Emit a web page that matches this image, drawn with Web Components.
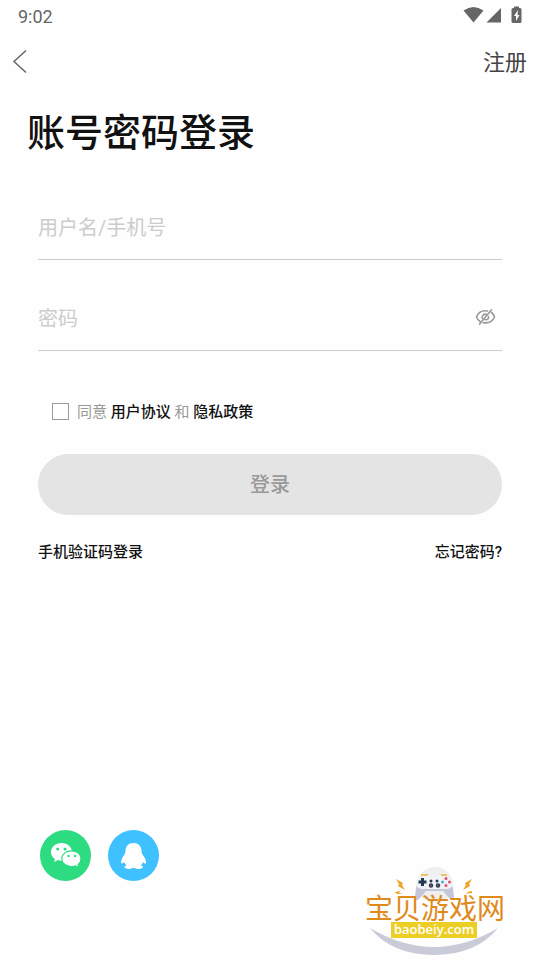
<!DOCTYPE html>
<html lang="zh-CN">
<head>
<meta charset="utf-8">
<meta name="viewport" content="width=device-width, initial-scale=1">
<title>账号密码登录</title>
<style>
  html, body { margin: 0; background: #fefefe; }
  body { font-family: Roboto, "Noto Sans CJK SC", sans-serif; color: #111; }
</style>
</head>
<body>
<login-page></login-page>

<script>
const define = (name, html, setup) => {
  const template = document.createElement('template');
  template.innerHTML = html;
  customElements.define(name, class extends HTMLElement {
    constructor() {
      super();
      this.attachShadow({ mode: 'open' }).append(template.content.cloneNode(true));
    }
    connectedCallback() { if (setup) setup(this, this.shadowRoot); }
  });
};

define('status-bar', `
  <style>
    :host { display: flex; align-items: center; justify-content: space-between; height: 32px; padding: 0 16px 0 18px; color: #666; font-size: 18px; font-weight: 400; }
    svg { display: block; }
  </style>
  <time>9:02</time>
  <svg width="61" height="20" viewBox="463 6 61 20" fill="#666" aria-hidden="true">
    <path d="M463.500 10.500Q473.500 3.500 483.500 10.500L473.500 22.500Z"/>
    <path d="M501 8V22.500H486.500Z"/>
    <path fill-rule="evenodd" d="M514 8V6.500H519V8H520Q521.500 8 521.500 9.500V21.500Q521.500 23 520 23H513Q511.500 23 511.500 21.500V9.500Q511.500 8 513 8ZM518 10L514 16H516V21L519.500 15H517.500Z"/>
  </svg>`);

define('nav-bar', `
  <style>
    :host { display: flex; align-items: center; justify-content: space-between; height: 60px; padding: 0 13px 0 12px; }
    button { display: flex; padding: 0; border: 0; background: none; }
    a { padding-top: 2px; color: #444; font-size: 22px; line-height: 32px; text-decoration: none; }
  </style>
  <button type="button" aria-label="返回">
    <svg width="16" height="26" viewBox="0 0 16 26" fill="none" stroke="#666" stroke-width="1.500"><path d="M14 1.500L2 12.500L14 23.500"/></svg>
  </button>
  <a href="#register"><slot></slot></a>`);

define('text-field', `
  <style>
    :host { display: flex; align-items: center; height: 64px; border-bottom: 1px solid #ccc; }
    input { flex: 1; min-width: 0; padding: 2px 0 0; border: 0; outline: 0; background: none; color: #111; font: inherit; font-size: 20px; line-height: 32px; }
    input::placeholder { color: #ccc; opacity: 1; }
  </style>
  <input>
  <slot></slot>`, (host, root) => {
    const input = root.querySelector('input');
    input.type = host.getAttribute('type') || 'text';
    input.placeholder = host.getAttribute('label');
    input.setAttribute('aria-label', input.placeholder);
  });

define('eye-toggle', `
  <style>
    :host { display: block; padding: 0 6px 2px 0; }
    button { display: block; padding: 0; border: 0; background: none; }
    svg { display: block; }
  </style>
  <button type="button" aria-label="显示密码">
    <svg width="21" height="18" viewBox="0 0 21 18" fill="none" stroke="#999" stroke-width="1.600" stroke-linecap="round">
      <path d="M12.500 3C7 2 3.200 4.500 1.500 9C2.300 11 3.400 12.400 5 13.500M16.500 4.500C18 5.600 18.900 7.200 19.500 9C17.500 13.500 13.500 15.600 8.300 14.700M16.500 1.800L4.500 16.200M11 6.200C8.500 5.800 6.600 8 7.300 10.200M13.500 8.500C14 10.500 12.500 12.200 10.200 11.700"/>
    </svg>
  </button>`);

define('agreement-check', `
  <style>
    :host { display: flex; align-items: center; gap: 8px; height: 24px; font-size: 15px; line-height: 24px; color: #999; }
    input { appearance: none; box-sizing: border-box; width: 17px; height: 17px; margin: 0; border: 1px solid #999; background: #fff; }
    input:checked { background: #2ddb80; }
    label { padding-top: 1px; }
    a { color: #111; font-weight: 500; text-decoration: none; }
  </style>
  <input type="checkbox" id="agree">
  <label for="agree">同意 <a href="#terms">用户协议</a> 和 <a href="#privacy">隐私政策</a></label>`);

define('submit-button', `
  <style>
    :host { display: block; }
    button { display: block; width: 100%; height: 61px; padding: 0 0 2px; border: 0; border-radius: 31px; background: #e4e4e4; color: #999; font: inherit; font-size: 20px; font-weight: 500; }
  </style>
  <button type="submit"><slot></slot></button>`);

define('login-links', `
  <style>
    :host { display: flex; justify-content: space-between; font-size: 15px; line-height: 24px; }
    a { color: #111; font-weight: 500; text-decoration: none; }
  </style>
  <a href="#sms">手机验证码登录</a>
  <a href="#forgot">忘记密码?</a>`);

define('social-login', `
  <style>
    :host { display: flex; gap: 17px; }
    button { width: 51px; height: 51px; padding: 0; border: 0; border-radius: 50%; background: #2ddb80; }
    .qq { background: #3fc1ff; }
    svg { display: block; }
  </style>
  <button type="button" aria-label="微信登录">
    <svg width="51" height="51" viewBox="0 0 51 51">
      <path fill="#fff" d="M21.500 13C15.500 13 11 17 11 22C11 25 12.500 27.500 15 29L14 32L18 30Q20 31 23 30.500Q31 29 32 22C32 17 27.500 13 21.500 13Z"/>
      <path fill="#fff" stroke="#2ddb80" stroke-width="1.200" d="M31.500 20.800C26 20.800 21.800 24.300 21.800 28.800C21.800 33.300 26 36.500 31.500 36.500Q33.500 36.500 35.500 35.800L39 38L38 34.700Q41 32.200 41 28.800C41 24.300 37 20.800 31.500 20.800Z"/>
      <g fill="#2ddb80"><circle cx="17.700" cy="19" r="1.500"/><circle cx="25" cy="19" r="1.500"/><circle cx="28.500" cy="26" r="1.200"/><circle cx="35" cy="26" r="1.200"/></g>
    </svg>
  </button>
  <button type="button" class="qq" aria-label="QQ登录">
    <svg width="51" height="51" viewBox="0 0 51 51">
      <path fill="#fff" d="M25.500 13C20.500 13 17.500 16.500 17.500 21Q17.500 23 16.500 24.500C14.200 27.500 12.800 30.500 13.300 33Q14 34.500 16.200 32Q17 34 18.500 35.300Q16 36 16.500 37.500Q18 39.500 22.500 38.800L25.500 37.800L28.500 38.800Q33.500 39.500 35 37.500Q35 36 33 35.300Q34.500 34 35 32Q37 34.500 38 33C38.500 30.500 36.800 27.500 34.500 24.500Q33.500 23 33.500 21C33.500 16.500 30.500 13 25.500 13Z"/>
    </svg>
  </button>`);

define('site-mark', `
  <style>
    :host { display: block; }
    svg { display: block; }
    .name { fill: #e08a1c; font: 400 28px Roboto, "Noto Sans CJK SC", sans-serif; }
    .host { fill: #fff; font: 600 13px "Open Sans", sans-serif; }
  </style>
  <svg width="160" height="100" viewBox="0 0 160 100">
    <circle cx="80" cy="25" r="18" fill="#efefef"/>
    <path fill="#c9cbd9" d="M15 68Q79 106 143 68Q121 95 79 95Q37 95 15 68Z"/>
    <path fill="#c5c7d8" d="M69 18H90Q97 20 98 28L99 37Q99 42 95 39L88 31H71L64 39Q60 42 60 37L61 28Q62 20 69 18Z"/>
    <path fill="#f1f2f8" d="M68 16H91Q98 17 98 25Q97 28 92 29L67 29Q61 28 61 24Q61 17 68 16Z"/>
    <path stroke="#eeb43c" stroke-width="1.500" d="M66 15H73M86 15H92"/>
    <path stroke="#243a50" stroke-width="3" d="M67.500 18V26M63.500 22H71.500"/>
    <g fill="#243a50"><circle cx="76" cy="21" r="1.500"/><circle cx="82" cy="21" r="1.500"/><circle cx="76" cy="25.500" r="2.200"/><circle cx="83" cy="25.500" r="2.200"/></g>
    <g fill="#a04055"><circle cx="76" cy="25.500" r="1"/><circle cx="83" cy="25.500" r="1"/></g>
    <g fill="#dd5364"><circle cx="91" cy="18.500" r="1.500"/><circle cx="94.500" cy="22" r="1.500"/><circle cx="91" cy="25.500" r="1.500"/></g>
    <circle cx="87.500" cy="22" r="1.500" fill="#49afd3"/>
    <g fill="#eda624"><path d="M41 19L48 23L47 25L50 30L43 26L44 24ZM40 32L45 31L44 33L48 34L42 34Z"/><path d="M117 19L110 23L111 25L108 30L115 26L114 24ZM117 31L112 32L113 33L109 34L117 33Z"/></g>
    <text class="name" x="10" y="59">宝贝游戏网</text>
    <rect x="36" y="62" width="86" height="16" fill="#edce24"/>
    <text class="host" x="79" y="74" text-anchor="middle">baobeiy.com</text>
  </svg>`);

define('login-page', `
  <style>
    :host { display: flex; flex-direction: column; box-sizing: border-box; min-height: 100vh; position: relative; padding-bottom: 79px; }
    h1 { margin: 13px 27px 34px; font-size: 38px; line-height: 56px; font-weight: 500; color: #111; }
    form { display: flex; flex-direction: column; padding: 0 38px; }
    text-field + text-field { margin-top: 26px; }
    agreement-check { margin: 48px 14px 31px; }
    login-links { margin-top: 25px; }
    social-login { margin: auto 40px 0; padding-top: 32px; }
    site-mark { position: absolute; right: 25px; bottom: 0; }
  </style>
  <status-bar></status-bar>
  <nav-bar>注册</nav-bar>
  <h1>账号密码登录</h1>
  <form>
    <text-field label="用户名/手机号"></text-field>
    <text-field label="密码" type="password"><eye-toggle></eye-toggle></text-field>
    <agreement-check></agreement-check>
    <submit-button>登录</submit-button>
    <login-links></login-links>
  </form>
  <social-login></social-login>
  <site-mark></site-mark>`);
</script>
</body>
</html>
